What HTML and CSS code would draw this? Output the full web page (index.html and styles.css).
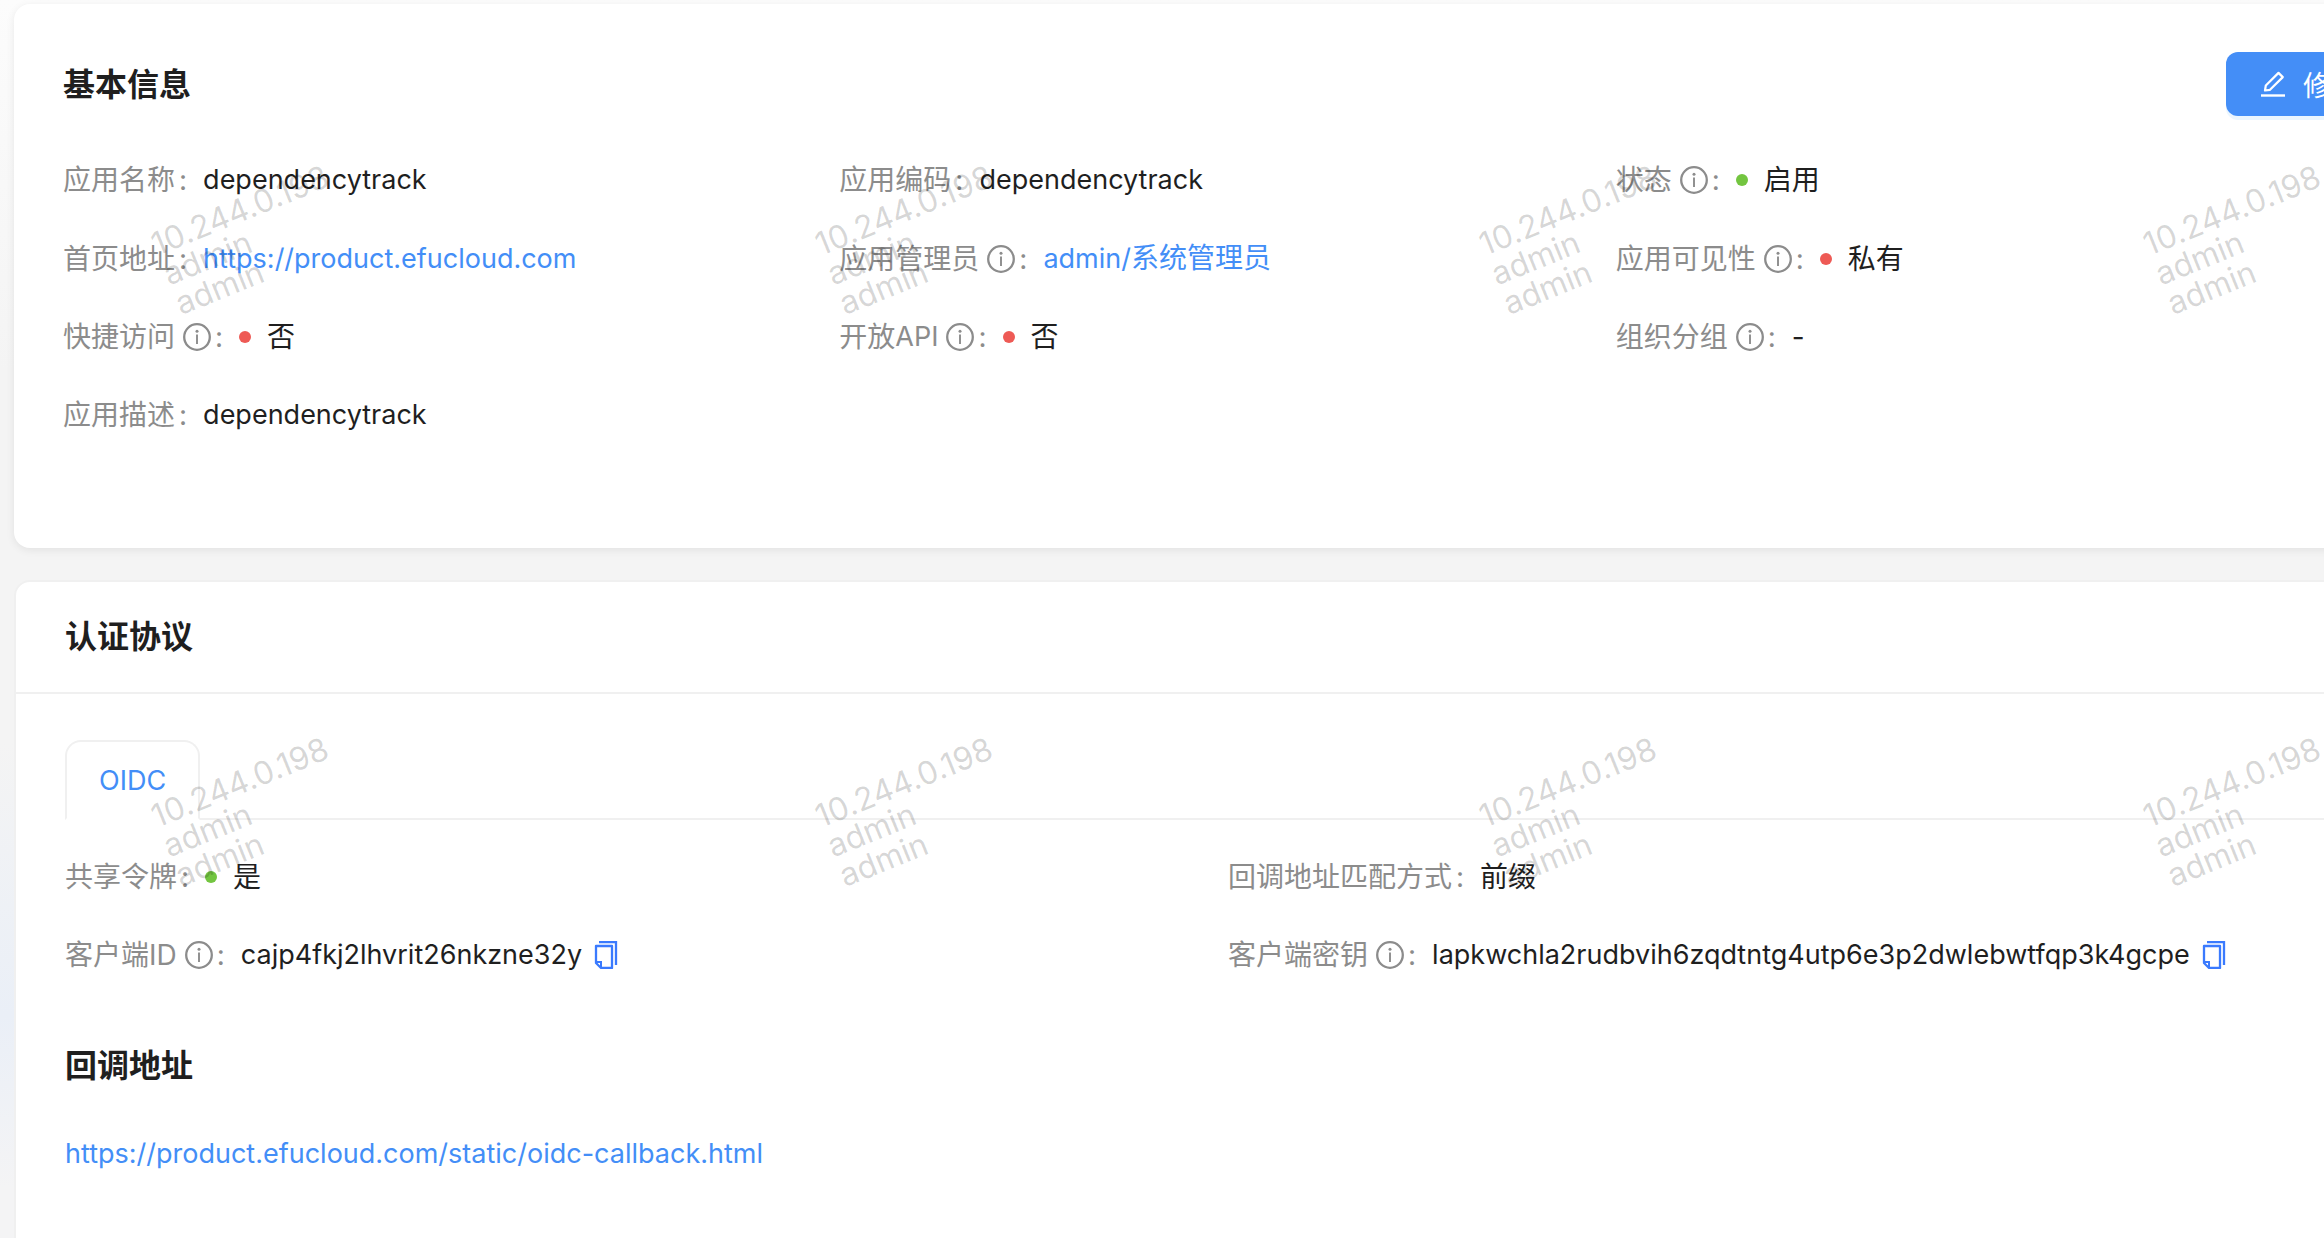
FILE: index.html
```
<!DOCTYPE html>
<html lang="zh-CN">

<head>
    <meta charset="UTF-8">
    <meta name="viewport" content="width=device-width, initial-scale=1.0">
    <title>应用详情</title>

    <link rel="stylesheet" href="styles.css">
</head>

<body>
    <!-- shared icons -->
    <svg class="sprite" aria-hidden="true">
        <symbol id="icon-info" viewBox="0 0 28 28">
            <circle cx="14" cy="14" r="12.800" fill="none" stroke="currentColor" stroke-width="2.300" />
            <circle cx="14" cy="8.300" r="1.500" fill="currentColor" />
            <path d="M14 11.500V21" fill="none" stroke="currentColor" stroke-width="1.900" />
        </symbol>
        <symbol id="icon-copy" viewBox="0 0 24 28">
            <path d="M5 1H22V24" fill="none" stroke="currentColor" stroke-width="2.300" />
            <path d="M2 5H18V27H7L2 22Z" fill="none" stroke="currentColor" stroke-width="2.300" stroke-linejoin="round" />
            <path d="M2 21H7V27" fill="none" stroke="currentColor" stroke-width="2" />
        </symbol>
        <symbol id="icon-edit" viewBox="0 0 28 28">
            <path d="M2 25.500H26" fill="none" stroke="currentColor" stroke-width="2.400" />
            <path d="M6 20.500L6.800 15.500L19.500 2.900L23.800 7.100L11 19.800Z" fill="none" stroke="currentColor" stroke-width="2.200" stroke-linejoin="round" />
        </symbol>
    </svg>

    <main class="page">
        <section class="card">
            <div class="card-title-bar">
                <h3>基本信息</h3>
                <button type="button" class="btn-primary"><svg class="icon"><use href="#icon-edit" /></svg>修改</button>
            </div>
            <dl class="descriptions columns-3">
                <div class="item">
                    <dt>应用名称</dt>
                    <dd class="latin">dependencytrack</dd>
                </div>
                <div class="item">
                    <dt>应用编码</dt>
                    <dd class="latin">dependencytrack</dd>
                </div>
                <div class="item">
                    <dt>状态<svg class="icon"><use href="#icon-info" /></svg></dt>
                    <dd><span class="dot green"></span>启用</dd>
                </div>
                <div class="item">
                    <dt>首页地址</dt>
                    <dd class="latin"><a href="https://product.efucloud.com">https://product.efucloud.com</a></dd>
                </div>
                <div class="item">
                    <dt>应用管理员<svg class="icon"><use href="#icon-info" /></svg></dt>
                    <dd><a href="#"><span class="latin">admin/</span>系统管理员</a></dd>
                </div>
                <div class="item">
                    <dt>应用可见性<svg class="icon"><use href="#icon-info" /></svg></dt>
                    <dd><span class="dot red"></span>私有</dd>
                </div>
                <div class="item">
                    <dt>快捷访问<svg class="icon"><use href="#icon-info" /></svg></dt>
                    <dd><span class="dot red"></span>否</dd>
                </div>
                <div class="item">
                    <dt>开放<span class="latin">API</span><svg class="icon"><use href="#icon-info" /></svg></dt>
                    <dd><span class="dot red"></span>否</dd>
                </div>
                <div class="item">
                    <dt>组织分组<svg class="icon"><use href="#icon-info" /></svg></dt>
                    <dd>-</dd>
                </div>
                <div class="item">
                    <dt>应用描述</dt>
                    <dd class="latin">dependencytrack</dd>
                </div>
            </dl>
        </section>

        <section class="card card-bordered">
            <div class="card-head">
                <h3>认证协议</h3>
            </div>
            <div class="card-body">
                <div class="tabs" role="tablist">
                    <button type="button" class="tab latin" role="tab" aria-selected="true">OIDC</button>
                </div>
                <dl class="descriptions columns-2">
                    <div class="item">
                        <dt>共享令牌</dt>
                        <dd><span class="dot green"></span>是</dd>
                    </div>
                    <div class="item">
                        <dt>回调地址匹配方式</dt>
                        <dd>前缀</dd>
                    </div>
                    <div class="item">
                        <dt>客户端ID<svg class="icon"><use href="#icon-info" /></svg></dt>
                        <dd class="latin">cajp4fkj2lhvrit26nkzne32y<button type="button" class="btn-copy" aria-label="复制"><svg><use href="#icon-copy" /></svg></button></dd>
                    </div>
                    <div class="item">
                        <dt>客户端密钥<svg class="icon"><use href="#icon-info" /></svg></dt>
                        <dd class="latin">lapkwchla2rudbvih6zqdtntg4utp6e3p2dwlebwtfqp3k4gcpe<button type="button" class="btn-copy" aria-label="复制"><svg><use href="#icon-copy" /></svg></button></dd>
                    </div>
                </dl>
                <h3 class="sub-title">回调地址</h3>
                <a class="latin" href="https://product.efucloud.com/static/oidc-callback.html">https://product.efucloud.com/static/oidc-callback.html</a>
            </div>
        </section>
    </main>

    <div class="watermark" aria-hidden="true">
        <div class="mark">10.244.0.198<br>admin<br>admin</div>
        <div class="mark">10.244.0.198<br>admin<br>admin</div>
        <div class="mark">10.244.0.198<br>admin<br>admin</div>
        <div class="mark">10.244.0.198<br>admin<br>admin</div>
        <div class="mark">10.244.0.198<br>admin<br>admin</div>
        <div class="mark">10.244.0.198<br>admin<br>admin</div>
        <div class="mark">10.244.0.198<br>admin<br>admin</div>
        <div class="mark">10.244.0.198<br>admin<br>admin</div>
    </div>
</body>

</html>
```

FILE: styles.css
```
* {
    box-sizing: border-box;
}

body {
    position: relative;
    height: 100vh;
    margin: 0;
    overflow: hidden;
    font-family: Inter, "Noto Sans CJK SC", sans-serif;
    font-size: 28px;
    line-height: 46px;
    color: #1f1f1f;
    background: linear-gradient(#fcfcfc 0, #f4f4f4 30%, #f4f4f4 60%, #eaeff7 82%, #f4f4f5 96%);
}

h3,
dl,
dd {
    margin: 0;
}

h3 {
    font-size: 32px;
    font-weight: 600;
    line-height: 48px;
}

a {
    color: #438ef7;
    text-decoration: none;
}

button {
    font-family: inherit;
    font-size: inherit;
    cursor: pointer;
}

.sprite {
    display: none;
}

.icon {
    flex: none;
    width: 28px;
    height: 28px;
}

.latin {
    font-size: 27px;
}

/* the cards run on past the right edge of the window */
.page {
    display: flex;
    flex-direction: column;
    gap: 32px;
    margin-right: -118px;
    padding: 4px 0 0 14px;
}

.card {
    padding: 48px 50px 110px 49px;
    background: #fff;
    border-radius: 16px;
    box-shadow: 0 2px 8px rgba(0, 0, 0, 0.08);
}

.card-title-bar {
    display: flex;
    align-items: center;
    justify-content: space-between;
    margin-bottom: 41px;
}

.card-title-bar h3 {
    padding-top: 2px;
}

.btn-primary {
    display: flex;
    align-items: center;
    gap: 16px;
    height: 64px;
    padding: 0 33px;
    color: #fff;
    background: #448ef7;
    border: 0;
    border-radius: 12px;
    box-shadow: 0 4px 0 #ebf6ff;
}

.descriptions {
    display: grid;
    row-gap: 32px;
}

.columns-3 {
    grid-template-columns: repeat(3, 1fr);
}

.columns-2 {
    grid-template-columns: repeat(2, 1fr);
}

.item,
.item dt,
.item dd {
    display: flex;
    align-items: center;
}

.item dt {
    color: #8c8c8c;
}

.item dt .icon {
    margin-left: 8px;
}

.item dt::after {
    content: ":";
    margin: 0 16px 0 4px;
}

.dot {
    width: 12px;
    height: 12px;
    margin-right: 16px;
    border-radius: 50%;
}

.green {
    background: #73c540;
}

.red {
    background: #ee5a55;
}

.btn-copy {
    display: flex;
    margin-left: 12px;
    padding: 0;
    color: #3a7afe;
    background: none;
    border: 0;
}

.btn-copy svg {
    width: 24px;
    height: 28px;
}

.card-bordered {
    padding: 0 0 80px;
    border: 2px solid #f0f0f0;
    box-shadow: none;
}

.card-head {
    padding: 31px 49px;
    border-bottom: 2px solid #f0f0f0;
}

.card-body {
    padding: 46px 49px;
}

.tabs {
    display: flex;
    margin-bottom: 34px;
    border-bottom: 2px solid #f0f0f0;
}

.tab {
    height: 80px;
    margin-bottom: -2px;
    padding: 0 32px;
    color: #438ef7;
    background: #fff;
    border: 2px solid #f0f0f0;
    border-bottom-color: #fff;
    border-radius: 16px 16px 0 0;
}

.sub-title {
    margin: 64px 0 40px;
}

.watermark {
    position: absolute;
    top: 0;
    left: 0;
    display: grid;
    grid-template-columns: repeat(4, 664px);
    grid-auto-rows: 572px;
    pointer-events: none;
}

.mark {
    width: 220px;
    height: 96px;
    margin: 231px 0 0 147px;
    font-size: 32px;
    line-height: 32px;
    color: rgba(0, 0, 0, 0.17);
    transform: rotate(-22deg);
    transform-origin: 0 0;
}
```
